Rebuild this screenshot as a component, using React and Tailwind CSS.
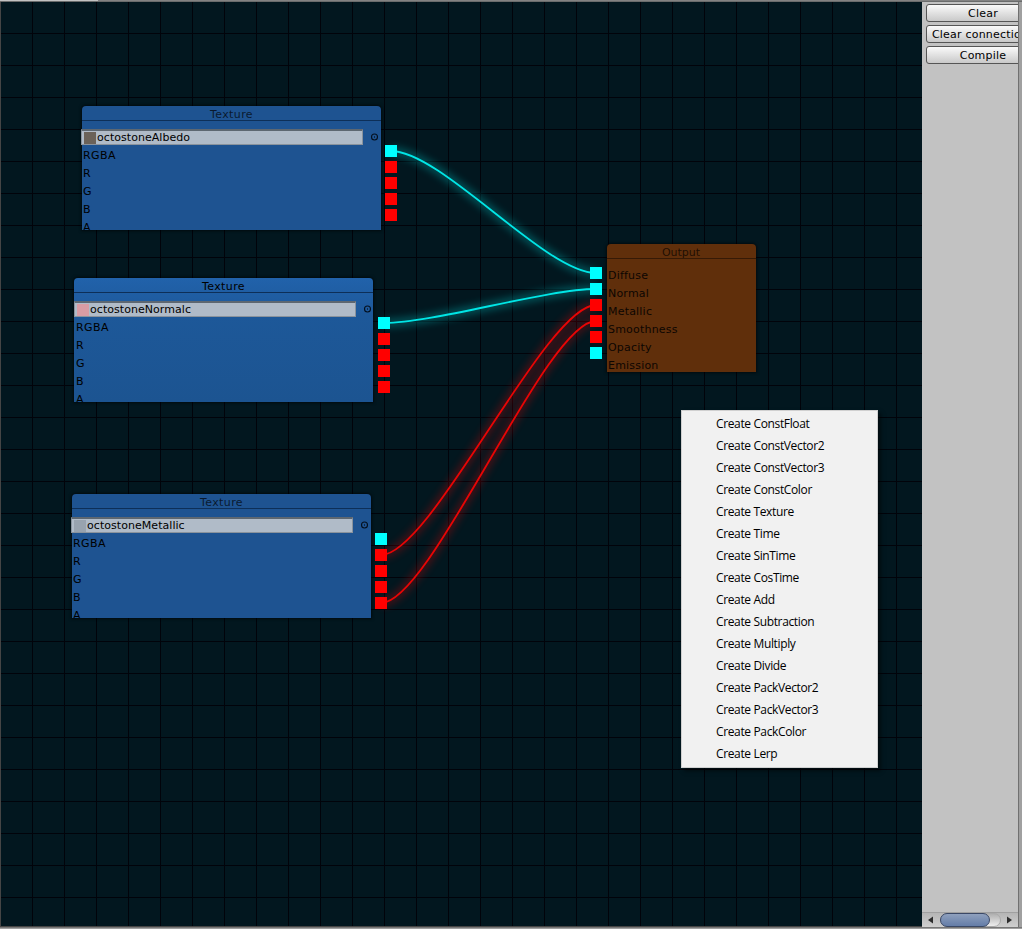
import React from "react";

const CYAN = "#00ffff";
const RED = "#ff0000";

const textures = [
  { name: "octostoneAlbedo", node: "left-[82px] top-[106px]", field: "-ml-px w-[282px]", pad: "pl-px", body: "bg-[#1e5391]", title: "text-black/70", thumb: "bg-[#6b6259]", ports: "left-[385px] top-[145px]" },
  { name: "octostoneNormalc", node: "left-[74px] top-[278px]", field: "w-[282px]", pad: "pl-[2px]", body: "bg-linear-to-b from-[#2162ab] via-[#1d5899] via-30% to-[#1c5491]", title: "text-black", thumb: "bg-[#d99ca4]", ports: "left-[378px] top-[317px]" },
  { name: "octostoneMetallic", node: "left-[72px] top-[494px]", field: "-ml-px w-[282px]", pad: "pl-px", body: "bg-[#1e5391]", title: "text-black/70", thumb: "bg-[#98a3af]", ports: "left-[375px] top-[533px]" },
];

const menu = [
  "ConstFloat", "ConstVector2", "ConstVector3", "ConstColor", "Texture", "Time", "SinTime", "CosTime",
  "Add", "Subtraction", "Multiply", "Divide", "PackVector2", "PackVector3", "PackColor", "Lerp",
];

const wires = [
  { d: "M391 151 C441 151 546 273 596 273", color: "#00e6e6" },
  { d: "M384 323 C434 323 546 289 596 289", color: "#00e6e6" },
  { d: "M381 555 C431 555 546 305 596 305", color: "#e80505" },
  { d: "M381 603 C431 603 546 321 596 321", color: "#e80505" },
];

function Ports({ place, colors }) {
  return (
    <div className={`absolute flex flex-col gap-1 ${place}`}>
      {colors.map((c, i) => (
        <span key={i} className={`size-3 ${c === CYAN ? "bg-[#00ffff]" : "bg-[#ff0000]"}`} />
      ))}
    </div>
  );
}

function TextureNode({ t }) {
  return (
    <section className={`absolute h-[124px] w-[299px] rounded-t-[4px] shadow-[0_0_3px_1px_#00000090] ${t.node} ${t.body}`}>
      <h2 className={`h-[15px] border-b border-[#0d2f58] text-center leading-[18px] tracking-[0.4px] ${t.title}`}>Texture</h2>
      <div className="mt-2 flex h-4 items-center">
        <div className={`flex h-4 items-center border border-t-2 border-[#8a939d] border-t-[#5d6771] bg-[#b0bbc8] pl-[2px] ${t.field}`}>
          <span className={`size-3 shrink-0 ${t.thumb}`} />
          <span className="pl-px leading-[14px] tracking-[0.05px]">{t.name}</span>
        </div>
        <svg className="ml-[7px] size-[9px]" viewBox="0 0 9 9">
          <circle cx="4.5" cy="4" r="3" fill="none" stroke="#04101f" strokeWidth="1.1" />
          <rect x="4" y="3.5" width="1" height="1" fill="#000" />
        </svg>
      </div>
      <ul className={`h-[85px] overflow-hidden pt-[2px] ${t.pad}`}>
        {["RGBA", "R", "G", "B", "A"].map((r) => (
          <li key={r} className="h-[18px] leading-[18px] tracking-[0.4px]">{r}</li>
        ))}
      </ul>
    </section>
  );
}

function OutputNode() {
  return (
    <section className="absolute left-[607px] top-[244px] h-[128px] w-[149px] rounded-t-[4px] bg-[#602f0b] shadow-[0_0_3px_1px_#00000090]">
      <h2 className="h-[15px] border-b border-[#361a06] pr-px text-center leading-[18px] text-black/70">Output</h2>
      <ul className="mt-[8px] pl-px tracking-[0.2px] text-[#0d0602]">
        {["Diffuse", "Normal", "Metallic", "Smoothness", "Opacity", "Emission"].map((r) => (
          <li key={r} className="h-[18px] leading-[18px]">{r}</li>
        ))}
      </ul>
    </section>
  );
}

function ContextMenu() {
  return (
    <ul className="absolute left-[681px] top-[410px] h-[358px] w-[197px] border border-[#d0d0d0] bg-[#f1f1f1] py-[2px] pl-[34px] font-['Open_Sans','Noto_Sans',sans-serif] text-[12px] tracking-[-0.36px] shadow-[3px_3px_4px_#00000080]">
      {menu.map((m) => (
        <li key={m} className="h-[22px] whitespace-nowrap leading-[22px]">Create {m}</li>
      ))}
    </ul>
  );
}

function SideButton({ children }) {
  return (
    <button className="h-[18px] w-[115px] shrink-0 whitespace-nowrap rounded-[3px] border border-[#555] bg-linear-to-b from-[#fafafa] to-[#c9c9c9] text-center leading-[16px] tracking-[0.2px]">
      <span className="-ml-px inline-block pt-px">{children}</span>
    </button>
  );
}

export default function App() {
  return (
    <div className="flex h-[929px] w-[1022px] flex-col overflow-hidden bg-[#828282] font-['DejaVu_Sans',Verdana,sans-serif] text-[11px] text-black">
      <div className="flex h-[2px] shrink-0 flex-col">
        <div className="h-px w-[98px] bg-[#c2c2c2]" />
        <div className="h-px bg-[#6a6c6c]" />
      </div>
      <div className="flex h-[925px] shrink-0">
        <main className="relative w-[922px] overflow-hidden border-b border-l border-[#454545] bg-[#02171f]">
          <div className="absolute -left-px -top-[2px] h-[927px] w-[922px]">
            <svg className="absolute left-0 top-0" width="922" height="927">
              <defs>
                <pattern id="grid" width="32" height="32" patternUnits="userSpaceOnUse" x="0" y="1">
                  <path d="M0 0H32V1H1V32H0Z" fill="#01030a" />
                </pattern>
                <filter id="glow" x="0" y="0" width="922" height="927" filterUnits="userSpaceOnUse">
                  <feGaussianBlur stdDeviation="4.5" />
                </filter>
              </defs>
              <rect x="1" y="2" width="921" height="925" fill="url(#grid)" />
              {wires.map((w) => (
                <path key={`${w.d}g`} d={w.d} fill="none" stroke={w.color} strokeWidth="6" opacity="0.4" filter="url(#glow)" />
              ))}
              {wires.map((w) => (
                <path key={w.d} d={w.d} fill="none" stroke={w.color} strokeWidth="1.8" />
              ))}
            </svg>
            {textures.map((t) => <TextureNode key={t.name} t={t} />)}
            {textures.map((t) => <Ports key={t.name} place={t.ports} colors={[CYAN, RED, RED, RED, RED]} />)}
            <OutputNode />
            <Ports place="left-[590px] top-[267px]" colors={[CYAN, CYAN, RED, RED, RED, CYAN]} />
            <ContextMenu />
          </div>
        </main>
        <aside className="flex w-[96px] flex-col overflow-hidden bg-[#c2c2c2]">
          <div className="flex flex-1 flex-col gap-[3px] pl-1 pt-[2px]">
            <SideButton>Clear</SideButton>
            <SideButton>Clear connections</SideButton>
            <SideButton>Compile</SideButton>
          </div>
          <div className="flex h-[15px] items-center border-t border-[#a0a0a0] bg-linear-to-b from-[#b5b5b5] to-[#cfcfcf]">
            <svg className="ml-[6px] h-2 w-[5px]" viewBox="0 0 5 8"><path d="M5 .5V7.5L0 4Z" fill="#2d2d2d" /></svg>
            <div className="ml-[7px] h-[14px] w-[61px] rounded-full border border-[#aaa] bg-linear-to-b from-[#b0b0b0] to-[#eee]">
              <div className="-ml-px -mt-px h-[14px] w-[50px] rounded-full border border-[#3a4866] bg-linear-to-b from-[#8fa0bd] to-[#647da8]" />
            </div>
            <svg className="ml-[6px] h-2 w-[5px]" viewBox="0 0 5 8"><path d="M0 .5V7.5L5 4Z" fill="#2d2d2d" /></svg>
          </div>
        </aside>
        <div className="w-1 border-l border-[#707070] bg-[#a0a0a0]" />
      </div>
      <div className="h-[2px] shrink-0 border-t border-[#777] bg-[#a0a0a0]" />
    </div>
  );
}
